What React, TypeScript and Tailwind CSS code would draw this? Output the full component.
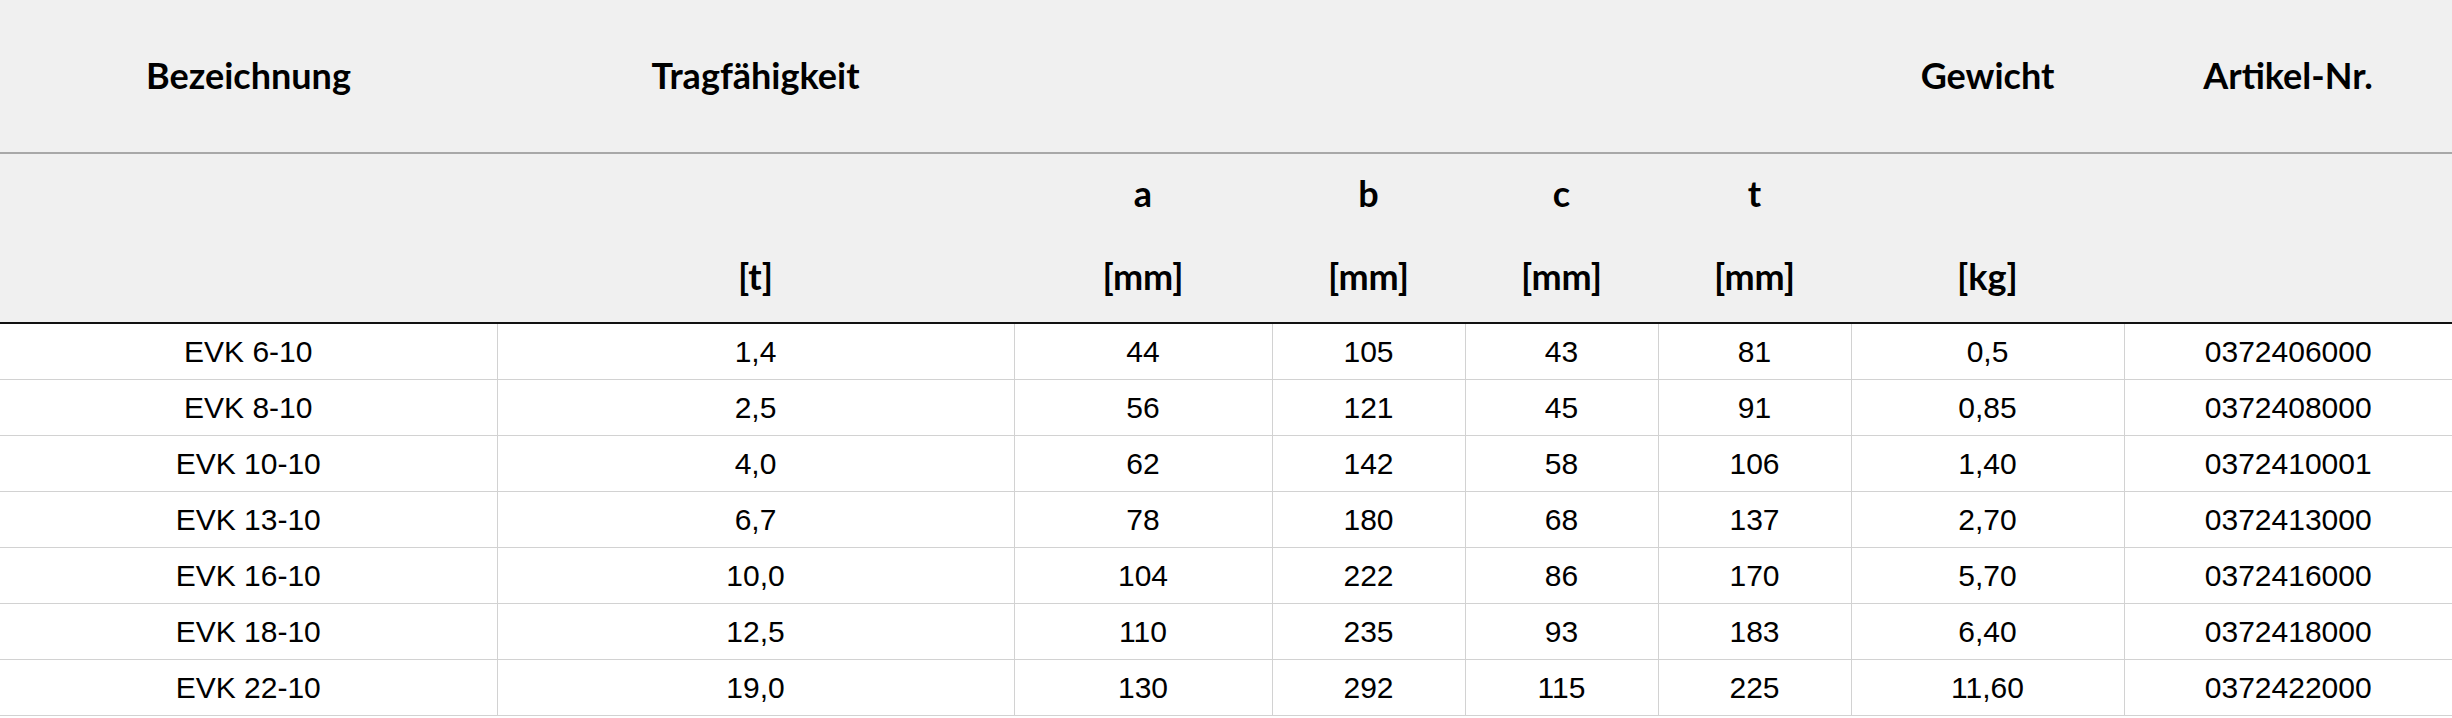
import React from "react";

const rows: string[][] = [
  ["EVK 6-10", "1,4", "44", "105", "43", "81", "0,5", "0372406000"],
  ["EVK 8-10", "2,5", "56", "121", "45", "91", "0,85", "0372408000"],
  ["EVK 10-10", "4,0", "62", "142", "58", "106", "1,40", "0372410001"],
  ["EVK 13-10", "6,7", "78", "180", "68", "137", "2,70", "0372413000"],
  ["EVK 16-10", "10,0", "104", "222", "86", "170", "5,70", "0372416000"],
  ["EVK 18-10", "12,5", "110", "235", "93", "183", "6,40", "0372418000"],
  ["EVK 22-10", "19,0", "130", "292", "115", "225", "11,60", "0372422000"],
];

const th = "p-0 text-center align-middle font-bold text-[36px] text-black font-['Lato',sans-serif]";
const th1 = th + " pb-[3px]";
const th2 = th + " pb-[6px]";
const th3 = th + " pb-[9px]";

export default function App() {
  return (
    <div className="w-[2452px] h-[718px] bg-white overflow-hidden">
      <table className="w-[2452px] table-fixed border-collapse">
        <colgroup>
          <col className="w-[497px]" />
          <col className="w-[517px]" />
          <col className="w-[258px]" />
          <col className="w-[193px]" />
          <col className="w-[193px]" />
          <col className="w-[193px]" />
          <col className="w-[273px]" />
          <col className="w-[328px]" />
        </colgroup>
        <thead className="bg-[#f0f0f0]">
          <tr className="h-[153px] border-b-2 border-[#a8a8a8]">
            <th className={th1}>Bezeichnung</th>
            <th className={th1}>Tragfähigkeit</th>
            <th className={th1}></th>
            <th className={th1}></th>
            <th className={th1}></th>
            <th className={th1}></th>
            <th className={th1}>Gewicht</th>
            <th className={th1}>Artikel-Nr.</th>
          </tr>
          <tr className="h-[85px]">
            <th className={th2}></th>
            <th className={th2}></th>
            <th className={th2}>a</th>
            <th className={th2}>b</th>
            <th className={th2}>c</th>
            <th className={th2}>t</th>
            <th className={th2}></th>
            <th className={th2}></th>
          </tr>
          <tr className="h-[85px] border-b-2 border-[#111111]">
            <th className={th3}></th>
            <th className={th3}>[t]</th>
            <th className={th3}>[mm]</th>
            <th className={th3}>[mm]</th>
            <th className={th3}>[mm]</th>
            <th className={th3}>[mm]</th>
            <th className={th3}>[kg]</th>
            <th className={th3}></th>
          </tr>
        </thead>
        <tbody>
          {rows.map((r, i) => (
            <tr key={i} className="h-[56px] border-b border-[#d2d2d2]">
              {r.map((c, j) => (
                <td
                  key={j}
                  className={
                    "p-0 text-center align-middle text-[30px] text-black font-['Liberation_Sans',Arial,sans-serif] " +
                    (j > 0 ? "border-l border-[#d2d2d2]" : "")
                  }
                >
                  {c}
                </td>
              ))}
            </tr>
          ))}
        </tbody>
      </table>
    </div>
  );
}
